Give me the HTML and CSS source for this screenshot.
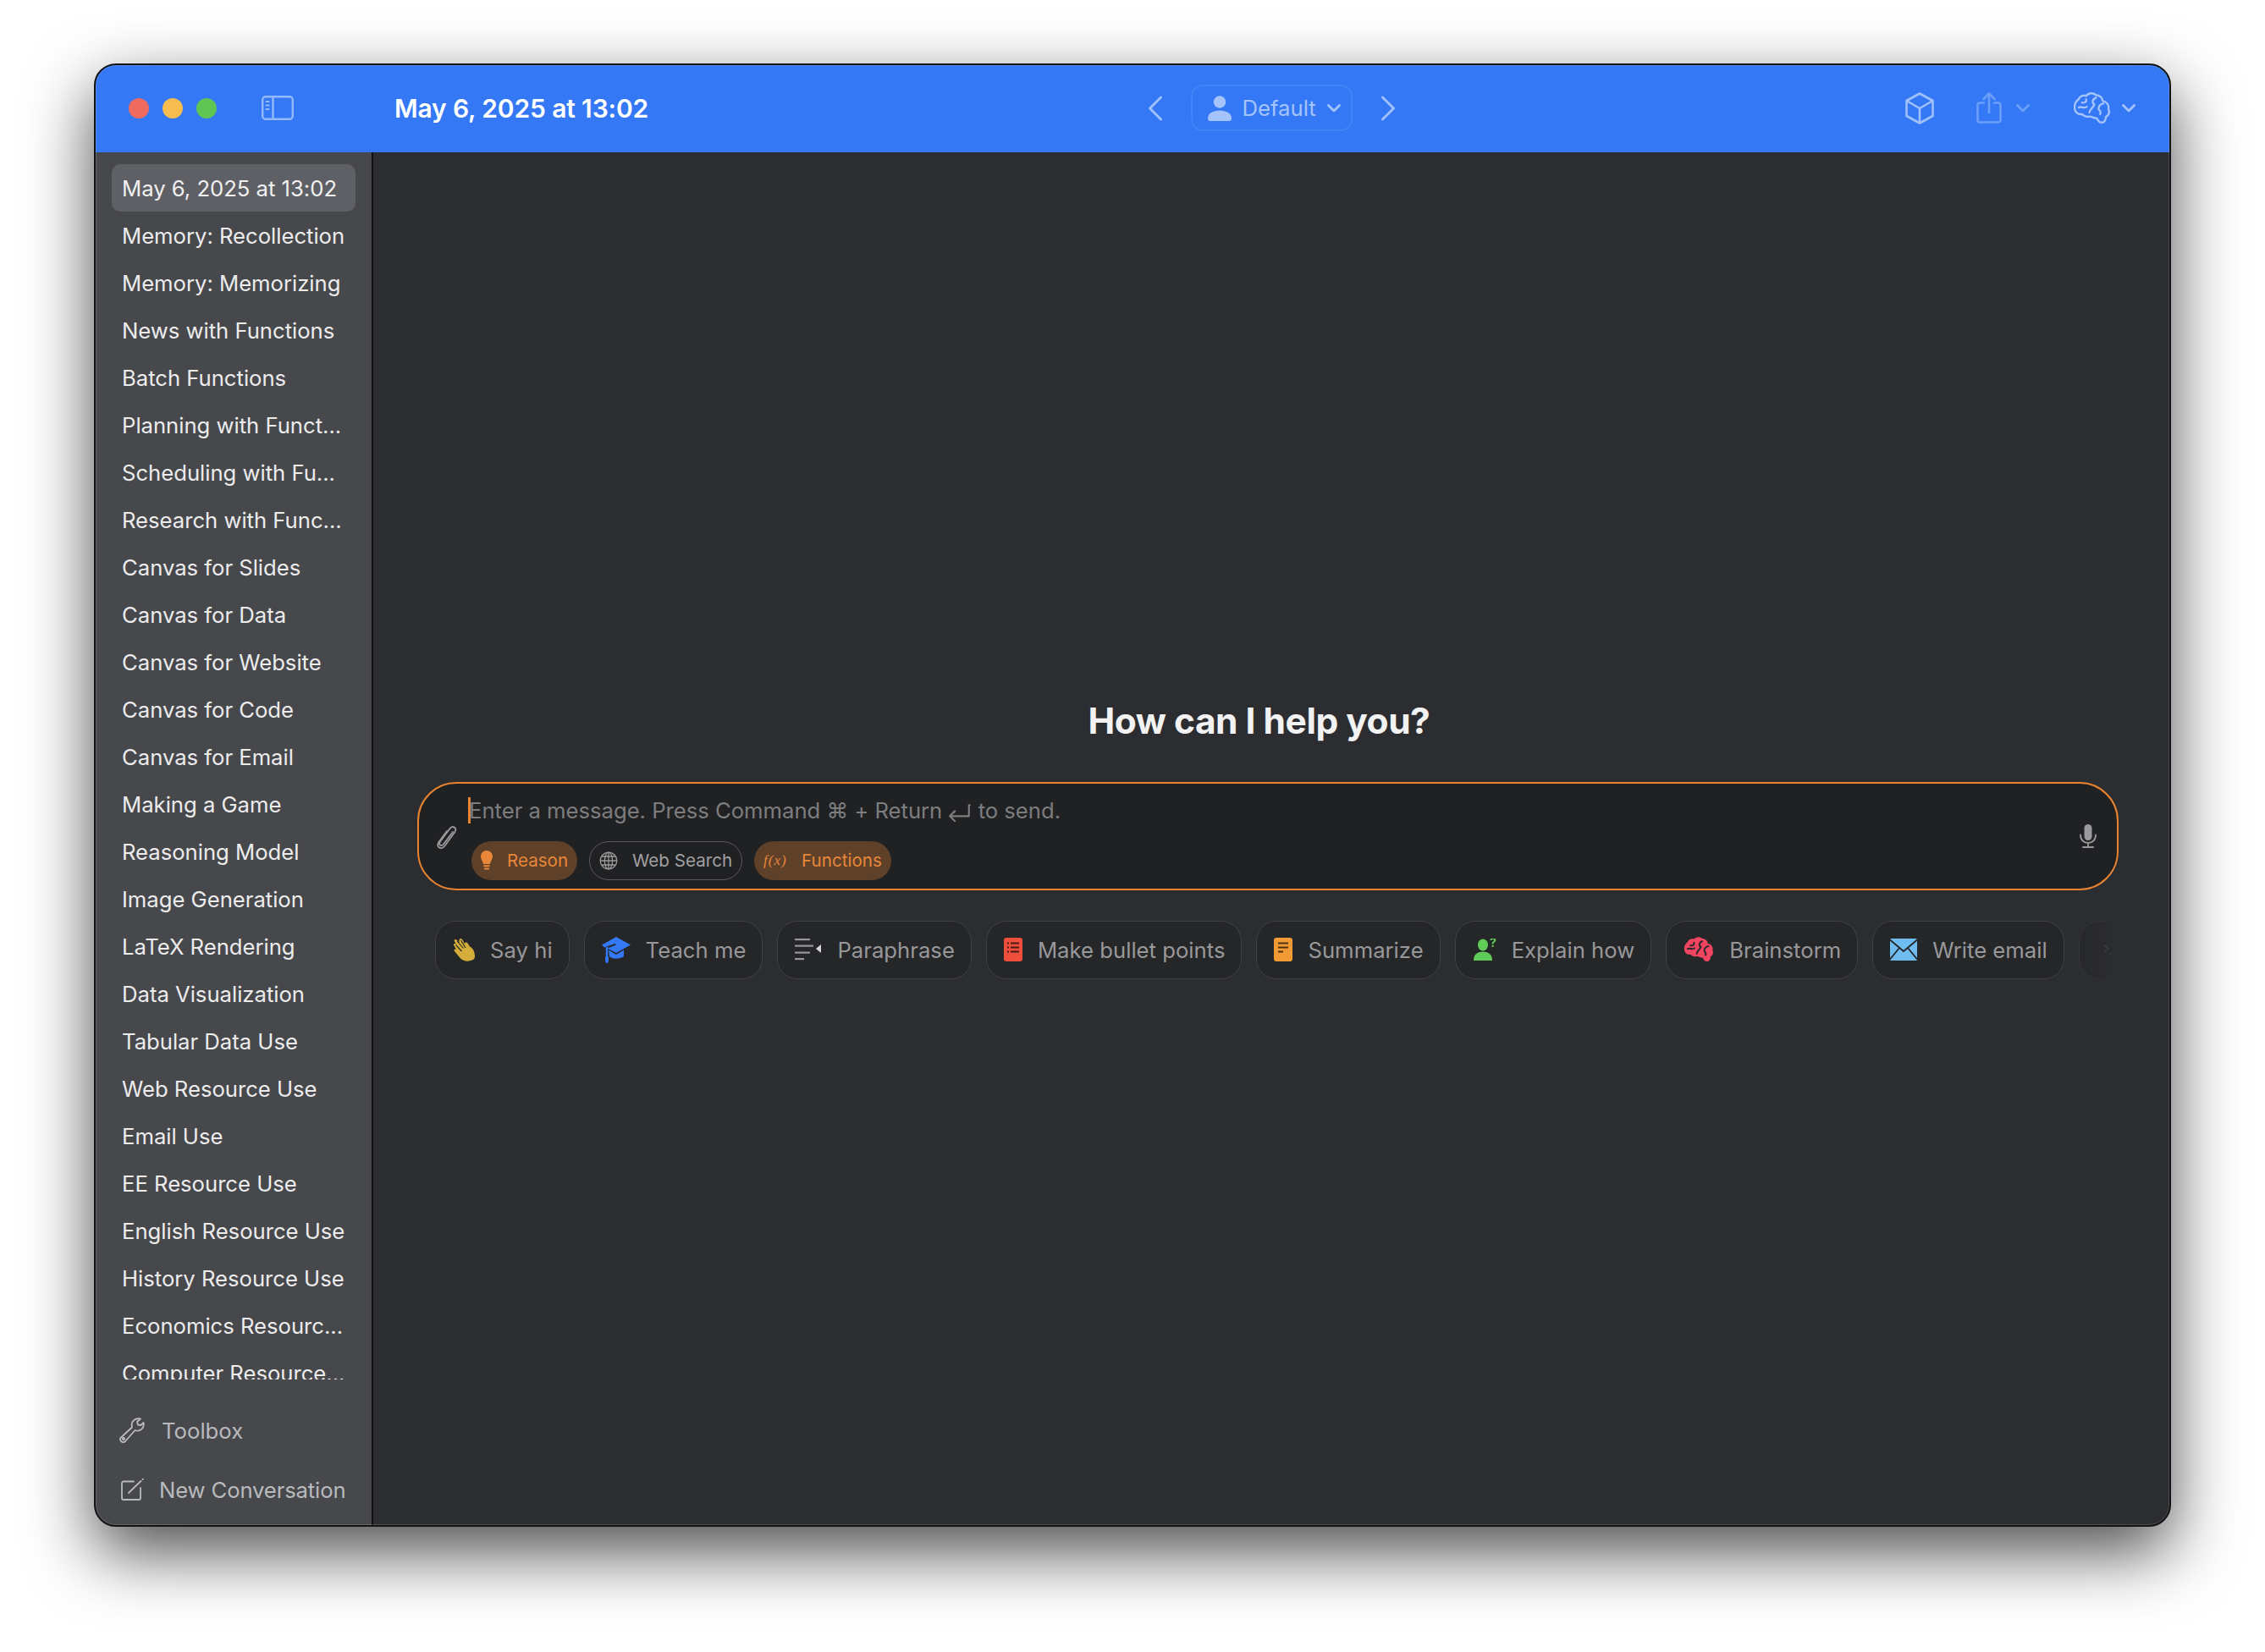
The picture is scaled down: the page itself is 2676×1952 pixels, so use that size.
FILE: index.html
```html
<!DOCTYPE html>
<html lang="en">
<head>
    <meta charset="UTF-8">
    <title>Chat</title>
    <link rel="stylesheet" href="styles.css">
</head>
<body>
<div class="window">
    <header class="titlebar">
        <div class="lead">
            <span class="light red"></span>
            <span class="light yellow"></span>
            <span class="light green"></span>
            <svg class="side-toggle" width="38" height="29" viewBox="0 0 38 29" fill="none" stroke="#a5c5fb" stroke-width="2.4"><rect x="1.2" y="1.2" width="35.6" height="26.6" rx="3.5"/><path d="M13.5 1.2v26.6"/><path d="M4.8 7h4.6M4.8 11.5h4.6M4.8 16h4.6" stroke-width="2"/></svg>
        </div>
        <div class="title-side">May 6, 2025 at 13:02</div>
        <div class="center-nav">
            <svg width="18" height="30" viewBox="0 0 18 30" fill="none" stroke="#9fc0fb" stroke-width="3" stroke-linecap="round" stroke-linejoin="round"><path d="M15.5 2 2.5 15l13 13"/></svg>
            <div class="persona">
                <svg width="28" height="30" viewBox="0 0 28 30" fill="#a4c4fb"><circle cx="14" cy="7.5" r="7.2"/><path d="M0 27c0-6 6-9.5 14-9.5S28 21 28 27c0 2-1.2 3-3 3H3c-1.800 0-3-1-3-3z"/></svg>
                <span>Default</span>
                <svg width="16" height="10" viewBox="0 0 16 10" fill="none" stroke="#a4c4fb" stroke-width="2.8" stroke-linecap="round" stroke-linejoin="round"><path d="m1.500 1.500 6.500 6.500 6.500-6.500"/></svg>
            </div>
            <svg width="18" height="30" viewBox="0 0 18 30" fill="none" stroke="#9fc0fb" stroke-width="3" stroke-linecap="round" stroke-linejoin="round"><path d="M2.500 2 15.500 15l-13 13"/></svg>
        </div>
        <div class="tools">
            <svg class="cube" width="34" height="38" viewBox="0 0 34 38" fill="none" stroke="#a0c0fb" stroke-width="2.600" stroke-linejoin="round"><path d="M17 1.500 32.500 10v18L17 36.500 1.500 28V10z"/><path d="M1.500 10 17 19l15.500-9M17 19v17.500"/></svg>
            <svg class="share" width="30" height="38" viewBox="0 0 30 38" fill="none" stroke="#6c9ff9" stroke-width="2.600" stroke-linecap="round" stroke-linejoin="round"><path d="M9 12.500H4a2.500 2.500 0 0 0-2.500 2.500v18A2.500 2.500 0 0 0 4 35.500h22a2.500 2.500 0 0 0 2.500-2.500V15a2.500 2.500 0 0 0-2.500-2.500h-5"/><path d="M15 24V2M8.500 8 15 1.500 21.500 8"/></svg>
            <svg class="chev-share" width="16" height="10" viewBox="0 0 16 10" fill="none" stroke="#6c9ff9" stroke-width="2.800" stroke-linecap="round" stroke-linejoin="round"><path d="m1.500 1.500 6.500 6.500 6.500-6.500"/></svg>
            <svg class="brain" width="43" height="38" viewBox="0 0 44 38" fill="none" stroke="#a4c4fb" stroke-width="2.400" stroke-linecap="round" stroke-linejoin="round"><path d="M6 8C8 3 13 3 15 4c3-4 9-4 12-1 4 0 8 3 8 7 5 1 8 5 7 10 2 4 0 8-3 9 0 4-2 8-6 7-3 0-4-3-5-5-4 0-7-3-10-2-4 1-7-2-8-3-5 1-9-3-9-8 0-5 2-8 5-10z"/><path d="M10 12c3 1 6-1 5-4M6 18c4-2 7 2 10-1M27 6c-5 2-5 7-2 8-1 4-5 5-6 10M36 13c-4 1-6 4-6 7 2 2 3 3 2 6"/></svg>
            <svg width="16" height="10" viewBox="0 0 16 10" fill="none" stroke="#a4c4fb" stroke-width="2.800" stroke-linecap="round" stroke-linejoin="round"><path d="m1.500 1.500 6.500 6.500 6.500-6.500"/></svg>
        </div>
    </header>
    <div class="body-row">
        <aside class="sidebar">
            <ul class="conv-list">
                <li class="active">May 6, 2025 at 13:02</li>
                <li>Memory: Recollection</li>
                <li>Memory: Memorizing</li>
                <li>News with Functions</li>
                <li>Batch Functions</li>
                <li>Planning with Funct...</li>
                <li>Scheduling with Fu...</li>
                <li>Research with Func...</li>
                <li>Canvas for Slides</li>
                <li>Canvas for Data</li>
                <li>Canvas for Website</li>
                <li>Canvas for Code</li>
                <li>Canvas for Email</li>
                <li>Making a Game</li>
                <li>Reasoning Model</li>
                <li>Image Generation</li>
                <li>LaTeX Rendering</li>
                <li>Data Visualization</li>
                <li>Tabular Data Use</li>
                <li>Web Resource Use</li>
                <li>Email Use</li>
                <li>EE Resource Use</li>
                <li>English Resource Use</li>
                <li>History Resource Use</li>
                <li>Economics Resourc...</li>
                <li>Computer Resource...</li>
            </ul>
            <div class="side-foot">
                <div class="foot-row">
                    <svg width="30" height="30" viewBox="0 0 30 30" fill="none" stroke="#b9babd" stroke-width="1.800" stroke-linejoin="round" stroke-linecap="round"><path d="M1.500 24 15 11.500c-1-4 0-7 3-9 2-1.200 4.500-1.500 7-1l-4 3.500 1 3.500 3.500.5 3-3c.8 3-.2 6-2.500 8-2.500 1.800-5 2-7.500 1L7 28c-1.500 1.500-3.500 1.300-4.800 0-1.200-1.200-1.500-2.800-.7-4z"/><circle cx="5" cy="25" r="1.200"/></svg>
                    <span>Toolbox</span>
                </div>
                <div class="foot-row foot-new">
                    <svg width="30" height="26" viewBox="0 0 30 26" fill="none" stroke="#b9babd" stroke-width="1.800" stroke-linecap="round" stroke-linejoin="round"><path d="M17 3.500H5a2 2 0 0 0-2 2V23a2 2 0 0 0 2 2h18a2 2 0 0 0 2-2V11"/><path d="M11 17 25.500 3M27.500 1l.5-.4"/></svg>
                    <span>New Conversation</span>
                </div>
            </div>
        </aside>
        <main class="main">
            <h1 class="greeting">How can I help you?</h1>
            <div class="composer">
                <svg class="clip" width="24" height="30" viewBox="0 0 24 30" fill="none" stroke="#9a9a9c" stroke-width="1.800" stroke-linecap="round"><path d="M19 9 8 23.500c-1.300 1.700-3 1.800-4 1-1-1-1-2.500 0-4L15.500 5c1.700-2.200 4-2.500 5.600-1.200 1.600 1.400 1.500 3.700 0 5.700L9.500 25.500c-2.200 2.800-5 3.300-6.800 1.800-1.900-1.600-1.700-4.300 0-6.800L12 8"/></svg>
                <div class="composer-mid">
                    <div class="placeholder"><span class="caret"></span>Enter a message. Press Command ⌘ + Return <svg class="return-key" width="28" height="22" viewBox="0 0 26 20" fill="none" stroke="#7d7d7f" stroke-width="2" stroke-linecap="round" stroke-linejoin="round"><path d="M24 2h-1v12H2M7.500 8.500 2 14l5.500 5.500"/></svg> to send.</div>
                    <div class="pills">
                        <div class="pill on">
                            <svg width="14" height="24" viewBox="0 0 14 24" fill="#e8873a"><path d="M7 0c3.800 0 7 3 7 6.800 0 3.400-2.300 5.500-3 9.200H3C2.300 12.300 0 10.200 0 6.800 0 3 3.200 0 7 0z"/><rect x="3.200" y="17.200" width="7.600" height="2" rx="1"/><rect x="3.800" y="20.400" width="6.400" height="2" rx="1"/></svg>
                            <span>Reason</span>
                        </div>
                        <div class="pill off">
                            <svg width="22" height="22" viewBox="0 0 22 22" fill="none" stroke="#9a9a9c" stroke-width="1.300"><circle cx="11" cy="11" r="9.800"/><ellipse cx="11" cy="11" rx="4.600" ry="9.800"/><path d="M11 1.200v19.600M1.200 11h19.600M2.600 6h16.800M2.600 16h16.800"/></svg>
                            <span>Web Search</span>
                        </div>
                        <div class="pill on">
                            <i class="fx">f(x)</i>
                            <span>Functions</span>
                        </div>
                    </div>
                </div>
                <svg class="mic" width="20" height="28" viewBox="0 0 20 28" fill="none" stroke="#9a9a9c" stroke-width="1.800" stroke-linecap="round"><rect x="5.500" y="0" width="9" height="19" rx="4.500" fill="#9a9a9c" stroke="none"/><path d="M1 12.500c0 6 4 9.500 9 9.500s9-3.500 9-9.500M10 22v4.500M4 27h12"/></svg>
            </div>
            <div class="chips">
                <div class="chip">
                    <svg width="26" height="28" viewBox="0 0 26 28"><path fill="#d4ad3a" d="M21 27c-4 1.500-9 .5-12-2.500L2 16c-1.500-1.800.7-3.500 2.200-2L1.500 9.500C0 7.500 2.200 6 3.800 7.500L2 4.500C.8 2.500 3 1 4.500 2.500L8 6.500C7 3.500 7.500 1 9.500 1c1.200 0 1.800 1 2.300 2l2 4c.7-2 2.700-2 3.700-.5l2.500 4c2 1 3.500 2.500 4.500 4.500 1.300 3 1.800 6 1.300 8.500-.3 2-2 3-4.800 3.500z"/><path d="M3.500 8.500l7 7.500M5 4l7.500 8.500M9.500 3l5.500 9" stroke="#26272a" stroke-width="1.100" fill="none"/></svg>
                    <span>Say hi</span>
                </div>
                <div class="chip">
                    <svg width="34" height="31" viewBox="0 0 34 31" fill="#3478f6"><path d="M17 0 34 9.500 17 19 6.500 13.500 17 9.500 15.500 8 3 12.500 0 9.500z"/><path d="M8 15.500 17 21l9-5.500V23c-2.500 1.800-5.500 2.800-9 2.800-3 0-5.500-.8-8-2.500z"/><rect x="4.800" y="12" width="2.400" height="12"/><ellipse cx="6" cy="26.500" rx="2" ry="4.500"/></svg>
                    <span>Teach me</span>
                </div>
                <div class="chip">
                    <svg width="32" height="26" viewBox="0 0 32 26" fill="#98989a"><rect x="0" y="0" width="18" height="2.200"/><rect x="0" y="7.500" width="22" height="2.200"/><rect x="0" y="15.500" width="18" height="2.200"/><rect x="0" y="23" width="11" height="2.200"/><path d="M31 7v10l-6-5z" fill="#d8d8da"/></svg>
                    <span>Paraphrase</span>
                </div>
                <div class="chip">
                    <svg width="22" height="28" viewBox="0 0 22 28"><rect width="22" height="28" rx="3" fill="#ef4e3c"/><path d="M4 6.500h2M4 11.500h2M4 16.500h2M8 6.500h10M8 11.500h10M8 16.500h10" stroke="#4a1a14" stroke-width="1.800"/></svg>
                    <span>Make bullet points</span>
                </div>
                <div class="chip">
                    <svg width="22" height="28" viewBox="0 0 22 28"><rect width="22" height="28" rx="3" fill="#f29a33"/><path d="M5 6.500h12M5 11.500h12M5 16.500h6" stroke="#4f3310" stroke-width="1.800"/></svg>
                    <span>Summarize</span>
                </div>
                <div class="chip">
                    <svg width="28" height="26" viewBox="0 0 28 26" fill="#60cc58"><ellipse cx="12" cy="7.500" rx="6" ry="7"/><path d="M1 26c0-7 4-10.500 11-10.500S23 19 23 26z"/><text class="q" x="20" y="10">?</text></svg>
                    <span>Explain how</span>
                </div>
                <div class="chip">
                    <svg width="36" height="32" viewBox="0 0 44 38" fill="#ef4560" stroke="none"><path d="M6 8C8 3 13 3 15 4c3-4 9-4 12-1 4 0 8 3 8 7 5 1 8 5 7 10 2 4 0 8-3 9 0 4-2 8-6 7-3 0-4-3-5-5-4 0-7-3-10-2-4 1-7-2-8-3-5 1-9-3-9-8 0-5 2-8 5-10z"/><path d="M10 13c3 1 6-1 5-4M6 18c4-2 7 2 10-1M27 7c-5 2-5 7-2 8-1 4-5 5-6 10M36 14c-4 1-6 4-6 7 2 2 3 3 2 6" fill="none" stroke="#26272a" stroke-width="2.400" stroke-linecap="round"/></svg>
                    <span>Brainstorm</span>
                </div>
                <div class="chip">
                    <svg width="32" height="26" viewBox="0 0 32 26"><rect width="32" height="26" rx="1.500" fill="#6fbcf0"/><path d="M0 1.500 16 15 32 1.500M0 24.500 11 11M32 24.500 21 11" fill="none" stroke="#26272a" stroke-width="1.800"/></svg>
                    <span>Write email</span>
                </div>
                <div class="chip fade">
                    <svg width="14" height="12" viewBox="0 0 14 12" fill="none" stroke="#8a8a8c" stroke-width="1.400"><path d="m1 1 5 4-5 4M7 11h7"/></svg>
                </div>
            </div>
        </main>
    </div>
</div>
</body>
</html>
```
FILE: styles.css
```css
*{ padding: 0; margin: 0; box-sizing: border-box}
li{ list-style: none}
html, body{ height: 100%; overflow: hidden}
body{ background: #fff; padding: 75px 111px; font-family: Inter, "Noto Sans", sans-serif; font-size: 25.700px}
svg{ display: block; flex: none}

.window{ width: 2454px; height: 1729px; border: 2px solid #131315; border-radius: 26px; overflow: hidden;
    position: relative; display: flex; flex-direction: column; background: #2c2d31;
    box-shadow: 0 30px 80px rgba(0,0,0,.7)}
.window::after{ content: ""; position: absolute; inset: 0; border: 1.500px solid rgba(255,255,255,.16);
    border-radius: 24px; pointer-events: none}

/* title bar */
.titlebar{ height: 103px; flex: none; background: #3578f6; display: grid; padding-bottom: 2px;
    grid-template-columns: 328px 1fr auto 1fr; align-items: center}
.lead{ display: flex; align-items: center; gap: 16px; padding-left: 39px}
.light{ width: 24px; height: 24px; border-radius: 50%}
.red{ background: #ee6a5f}
.yellow{ background: #f5bd4f}
.green{ background: #61c554}
.side-toggle{ margin-left: 37px; opacity: .85}
.title-side{ padding-left: 25px; color: #fff; font-size: 30px; font-weight: 600; letter-spacing: -.15px}
.center-nav{ display: flex; align-items: center; gap: 33px}
.persona{ width: 191px; height: 55px; border: 2px solid #4383f7; border-radius: 14px; display: flex;
    align-items: center; gap: 13px; padding-left: 18px; color: #a4c4fb}
.tools{ display: flex; align-items: center; justify-content: flex-end; padding-right: 40px}
.cube{ margin-right: 1px}
.share{ margin-left: 49px}
.chev-share{ margin-left: 17px}
.brain{ margin: 0 14px 0 52px}

/* sidebar */
.body-row{ flex: 1; display: flex; min-height: 0}
.sidebar{ width: 328px; flex: none; background: #47484c; border-right: 2px solid #0f0f10; display: flex; flex-direction: column}
.conv-list{ height: 1450px; flex: none; overflow: hidden; padding: 14px 19px 0}
.conv-list li{ height: 56px; line-height: 56px; padding: 1px 0 0 12px; white-space: nowrap; color: #ececed; letter-spacing: -.03px}
.conv-list .active{ background: #5f6065; border-radius: 10px; color: #f0f0f1}
.side-foot{ padding: 25px 0 0 28px}
.foot-row{ height: 70px; display: flex; align-items: center; gap: 20px; color: #b9babd}
.foot-new{ gap: 17px; letter-spacing: -.15px}

/* main */
.main{ flex: 1; min-width: 0; display: flex; flex-direction: column; justify-content: center; padding: 0 60px 0 52px}
.greeting{ height: 52px; line-height: 52px; margin: 0 21px 46px 0; text-align: center; color: #f2f2f3; font-size: 42.500px; font-weight: 700; letter-spacing: -.5px}
.composer{ height: 128px; flex: none; background: #202123; border: 2px solid #e8832f; border-radius: 46px;
    display: flex; padding: 16px 24px 0 21px; gap: 14px}
.clip{ margin-top: 32px}
.composer-mid{ flex: 1; display: flex; flex-direction: column; gap: 21px}
.placeholder{ height: 31px; line-height: 31px; color: #7d7d7f; white-space: nowrap; letter-spacing: -.03px}
.caret{ display: inline-block; vertical-align: top; width: 3px; height: 31px; background: #e8832f; margin-right: -2px; margin-left: -1px}
.return-key{ display: inline-block; vertical-align: -4px}
.pills{ display: flex; gap: 14px; padding-left: 3px}
.pill{ height: 46px; border-radius: 23px; display: flex; align-items: center; gap: 17px; padding: 0 11px; font-size: 20.600px}
.pill.on{ background: #5f4028; color: #e8873a}
.pill.off{ border: 1.500px solid #5b5b5e; color: #a0a0a2}
.fx{ font-family: "Liberation Serif", serif; font-size: 17px; letter-spacing: 1px; width: 28px}
.mic{ margin-top: 32px}
.chips{ display: flex; gap: 17px; margin: 36px 4px 0 21px; overflow: hidden}
.chip{ height: 69px; flex: none; background: #252628; border: 1.500px solid #404144; border-radius: 24px; display: flex;
    align-items: center; gap: 18px; padding: 0 19px 0 20px; color: #98989a}
.chip .q{ font-size: 14px; font-weight: 700; fill: #60cc58}
.fade{ width: 80px; padding-left: 28px; opacity: .45; -webkit-mask-image: linear-gradient(90deg, #000 15%, transparent 55%)}
```
